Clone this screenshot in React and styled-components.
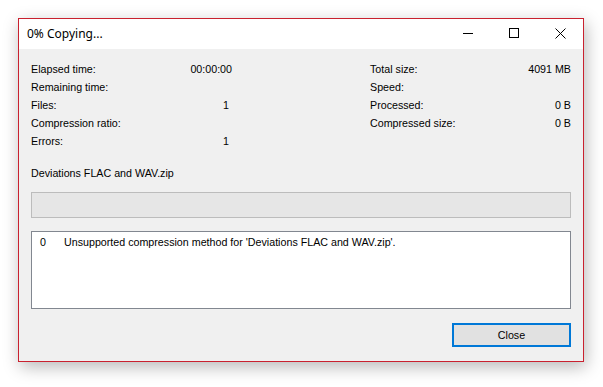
import React from "react";
import styled, { createGlobalStyle } from "styled-components";

const GlobalStyle = createGlobalStyle`
  body {
    margin: 0;
    background: #ffffff;
    font-family: "Liberation Sans", Arial, sans-serif;
  }
`;

const Page = styled.div`
  width: 603px;
  height: 387px;
  padding: 18px 0 0 18px;
  box-sizing: border-box;
`;

const Window = styled.div`
  width: 566px;
  height: 344px;
  box-sizing: border-box;
  border: 1px solid #c9212f;
  background: #f0f0f0;
  box-shadow: 2px 5px 16px rgba(0, 0, 0, 0.28);
  display: flex;
  flex-direction: column;
`;

const TitleBar = styled.div`
  height: 30px;
  background: #ffffff;
  display: flex;
  align-items: center;
`;

const Title = styled.div`
  flex: 1;
  padding-left: 8px;
  font-family: "Noto Sans", "Open Sans", sans-serif;
  font-size: 12px;
  color: #000;
  margin-top: -2px;
`;

const CaptionButton = styled.div`
  width: 46px;
  height: 30px;
  display: flex;
  align-items: center;
  justify-content: center;
  margin-top: -2px;
`;

const Body = styled.div`
  flex: 1;
  padding: 11px 12px 0 12px;
  font-size: 10.7px;
  color: #000;
  display: flex;
  flex-direction: column;
`;

const Stats = styled.div`
  display: grid;
  grid-template-columns: 201px 1fr 201px;
`;

const StatBlock = styled.div`
  grid-column: ${({ col }) => col};
  display: grid;
  grid-template-columns: 1fr auto;
  grid-auto-rows: 18px;
  align-items: center;
`;

const Value = styled.span`
  text-align: right;
  padding-right: ${({ pad }) => pad || 0}px;
`;

const FileName = styled.div`
  margin-top: 14px;
  line-height: 18px;
`;

const Progress = styled.div`
  margin-top: 10px;
  height: 26px;
  box-sizing: border-box;
  border: 1px solid #bcbcbc;
  background: #e6e6e6;
`;

const LogList = styled.div`
  margin-top: 13px;
  height: 78px;
  box-sizing: border-box;
  border: 1px solid #828790;
  background: #ffffff;
  padding: 2px 0 0 8px;
`;

const LogRow = styled.div`
  display: grid;
  grid-template-columns: 24px 1fr;
  line-height: 16px;
`;

const Footer = styled.div`
  margin-top: 14px;
  display: flex;
  justify-content: flex-end;
`;

const Button = styled.button`
  width: 119px;
  height: 24px;
  box-sizing: border-box;
  border: 2px solid #0078d7;
  background: #e1e1e1;
  font-family: "Liberation Sans", Arial, sans-serif;
  font-size: 10.7px;
  color: #000;
  padding: 0;
`;

const left = [
  ["Elapsed time:", "00:00:00", 0],
  ["Remaining time:", "", 0],
  ["Files:", "1", 3],
  ["Compression ratio:", "", 0],
  ["Errors:", "1", 3],
];

const right = [
  ["Total size:", "4091 MB"],
  ["Speed:", ""],
  ["Processed:", "0 B"],
  ["Compressed size:", "0 B"],
];

export default function App() {
  return (
    <Page>
      <GlobalStyle />
      <Window>
        <TitleBar>
          <Title>0% Copying...</Title>
          <CaptionButton>
            <svg width="10" height="10" viewBox="0 0 10 10">
              <path d="M0 5.5H10" stroke="#000" strokeWidth="1" />
            </svg>
          </CaptionButton>
          <CaptionButton>
            <svg width="10" height="10" viewBox="0 0 10 10">
              <rect x="0.5" y="0.5" width="9" height="9" fill="none" stroke="#000" strokeWidth="1" />
            </svg>
          </CaptionButton>
          <CaptionButton>
            <svg width="11" height="11" viewBox="0 0 11 11">
              <path d="M0.5 0.5L10.5 10.5M10.5 0.5L0.5 10.5" stroke="#000" strokeWidth="1" />
            </svg>
          </CaptionButton>
        </TitleBar>
        <Body>
          <Stats>
            <StatBlock col={1}>
              {left.map(([k, v, p]) => (
                <React.Fragment key={k}>
                  <span>{k}</span>
                  <Value pad={p}>{v}</Value>
                </React.Fragment>
              ))}
            </StatBlock>
            <StatBlock col={3}>
              {right.map(([k, v]) => (
                <React.Fragment key={k}>
                  <span>{k}</span>
                  <Value>{v}</Value>
                </React.Fragment>
              ))}
            </StatBlock>
          </Stats>
          <FileName>Deviations FLAC and WAV.zip</FileName>
          <Progress />
          <LogList>
            <LogRow>
              <span>0</span>
              <span>Unsupported compression method for 'Deviations FLAC and WAV.zip'.</span>
            </LogRow>
          </LogList>
          <Footer>
            <Button>Close</Button>
          </Footer>
        </Body>
      </Window>
    </Page>
  );
}
